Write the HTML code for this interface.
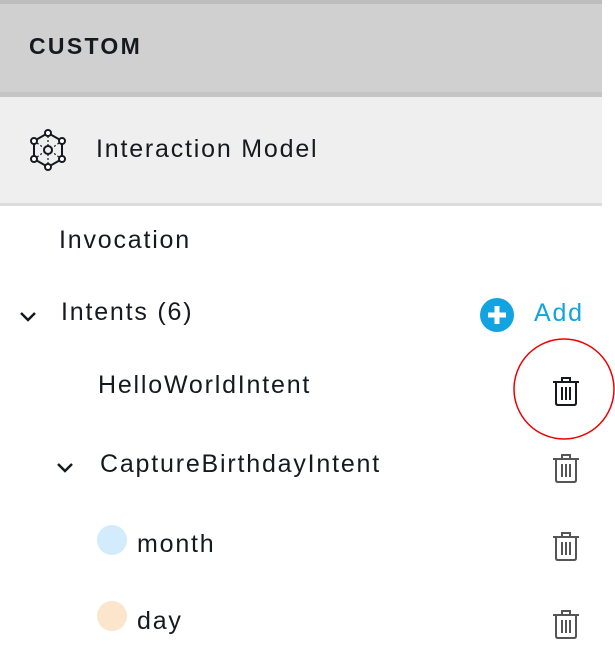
<!DOCTYPE html>
<html><head><style>
body{margin:0;width:615px;height:657px;background:#fff;position:relative;overflow:hidden;font-family:"Liberation Sans",sans-serif;color:#16191f}
.t{position:absolute;font-size:25px;white-space:nowrap;letter-spacing:1.8px}
</style></head><body>
<div style="position:absolute;left:0;top:0;width:602px;height:4px;background:#bdbdbd"></div>
<div style="position:absolute;left:0;top:4px;width:602px;height:88px;background:#cfd0cf"></div>
<div style="position:absolute;left:0;top:92px;width:602px;height:5px;background:#c4c5c4"></div>
<div style="position:absolute;left:0;top:97px;width:602px;height:106px;background:#efefef"></div>
<div style="position:absolute;left:0;top:203px;width:602px;height:3px;background:#dcdcdc"></div>
<div class="t" style="left:29px;top:33px;font-weight:bold;font-size:23px;letter-spacing:2.3px">CUSTOM</div>
<svg style="position:absolute;left:28px;top:128px" width="40" height="44" viewBox="0 0 40 44" fill="none" stroke="#16191f" stroke-width="2">
<path d="M20 5 L34 13 L34 31 L20 39 L6 31 L6 13 Z"/>
<circle cx="20" cy="5" r="3" fill="#fff"/><circle cx="34" cy="13" r="3" fill="#fff"/><circle cx="34" cy="31" r="3" fill="#fff"/><circle cx="20" cy="39" r="3" fill="#fff"/><circle cx="6" cy="31" r="3" fill="#fff"/><circle cx="6" cy="13" r="3" fill="#fff"/>
<circle cx="20" cy="22" r="4"/><path d="M20 8V18M20 26V36M9 15L16 20M31 15L24 20M9 29L16 24M31 29L24 24" stroke-dasharray="2 2" stroke-width="1.2"/>
</svg>
<div class="t" style="left:96px;top:135px">Interaction Model</div>
<div class="t" style="left:59px;top:226px">Invocation</div>
<svg style="position:absolute;left:19px;top:311px" width="18" height="12"><path d="M2 2L9 9L16 2" stroke="#16191f" stroke-width="2.5" fill="none"/></svg>
<div class="t" style="left:61px;top:298px">Intents (6)</div>
<svg style="position:absolute;left:479px;top:297px" width="36" height="36"><circle cx="18" cy="18" r="17" fill="#13a3e0"/><path d="M18 9V27M9 18H27" stroke="#fff" stroke-width="5"/></svg>
<div class="t" style="left:534px;top:299px;color:#13a3e0">Add</div>
<div class="t" style="left:98px;top:371px">HelloWorldIntent</div>
<svg style="position:absolute;left:56px;top:462px" width="18" height="12"><path d="M2 2L9 9L16 2" stroke="#16191f" stroke-width="2.5" fill="none"/></svg>
<div class="t" style="left:100px;top:450px">CaptureBirthdayIntent</div>
<div style="position:absolute;left:97px;top:525px;width:30px;height:30px;border-radius:50%;background:#d2ecfb"></div>
<div class="t" style="left:137px;top:530px">month</div>
<div style="position:absolute;left:97px;top:601px;width:30px;height:30px;border-radius:50%;background:#fbe6cc"></div>
<div class="t" style="left:137px;top:607px">day</div>
<svg style="position:absolute;left:0;top:0" width="615" height="657">
<defs><g id="tr" fill="none" stroke-width="2"><path d="M-13 -9H13M-4 -9V-13H4V-9M-10 -9V12Q-10 14 -8 14H8Q10 14 10 12V-9M-4 -4V9M0 -4V9M4 -4V9"/></g></defs>
<use href="#tr" x="566" y="391" stroke="#16191f"/>
<use href="#tr" x="566" y="468" stroke="#555"/>
<use href="#tr" x="566" y="546" stroke="#555"/>
<use href="#tr" x="566" y="624" stroke="#555"/>
<circle cx="564" cy="389" r="50" fill="none" stroke="#e00" stroke-width="1.5"/>
</svg>
</body></html>
